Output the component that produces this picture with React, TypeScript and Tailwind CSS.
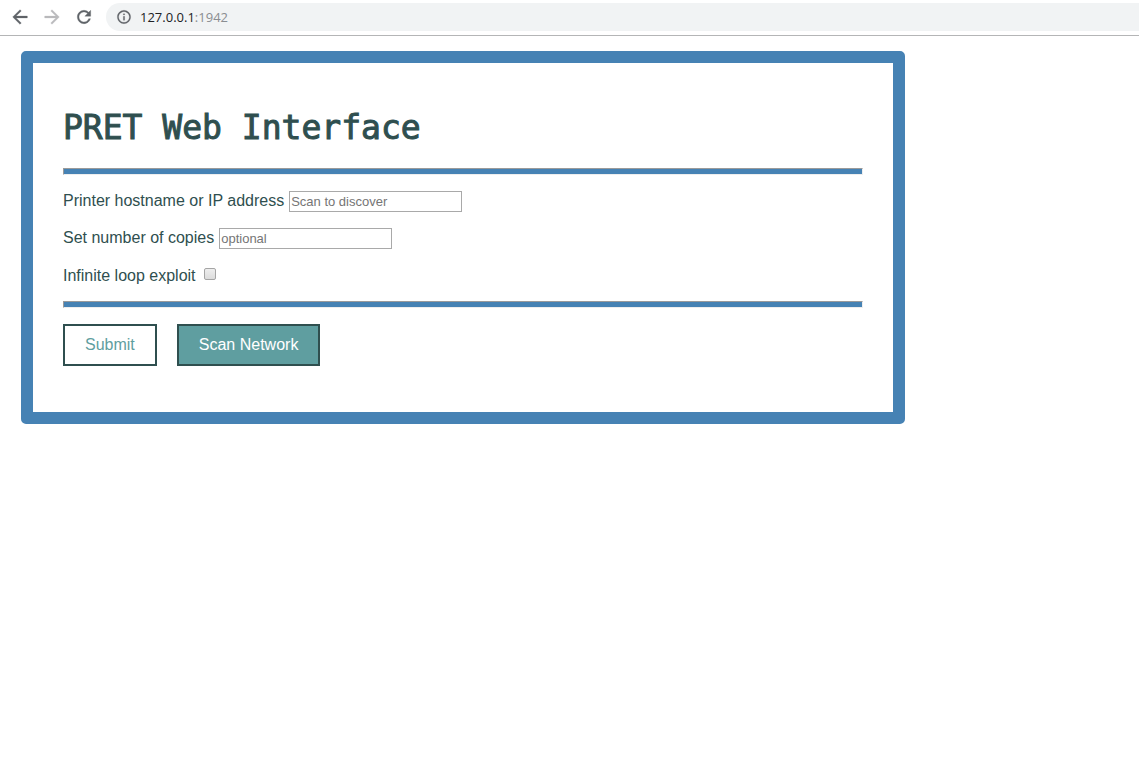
import React from "react";

function Divider() {
  return (
    <hr className="h-[7px] border border-t-[#9a9a9a] border-r-[#eeeeee] border-b-[#eeeeee] border-l-[#9a9a9a] bg-[#4682b4]" />
  );
}

function BrowserBar() {
  return (
    <header className="flex h-9 items-start border-b border-[#b4b5b6] bg-white pt-[3px] pl-2">
      <nav className="flex h-7 items-center gap-2" aria-label="Browser">
        <button type="button" aria-label="Back" className="flex size-6 items-center justify-center text-[#5f6368]">
          <svg viewBox="0 0 24 24" className="size-[22px]" fill="currentColor" stroke="currentColor" strokeWidth="0.3">
            <path d="M20 11H7.83l5.59-5.59L12 4l-8 8 8 8 1.41-1.41L7.83 13H20v-2z" />
          </svg>
        </button>
        <button type="button" aria-label="Forward" className="flex size-6 items-center justify-center text-[#bababc]">
          <svg viewBox="0 0 24 24" className="size-[22px]" fill="currentColor" stroke="currentColor" strokeWidth="0.3">
            <path d="M12 4l-1.41 1.41L16.17 11H4v2h12.17l-5.58 5.59L12 20l8-8z" />
          </svg>
        </button>
        <button type="button" aria-label="Reload" className="flex size-6 items-center justify-center text-[#5f6368]">
          <svg viewBox="0 0 24 24" className="size-5" fill="currentColor" stroke="currentColor" strokeWidth="0.4">
            <path d="M17.65 6.35C16.2 4.9 14.21 4 12 4c-4.42 0-7.99 3.58-7.99 8s3.57 8 7.99 8c3.73 0 6.84-2.55 7.73-6h-2.08c-.82 2.33-3.04 4-5.65 4-3.31 0-6-2.69-6-6s2.69-6 6-6c1.66 0 3.14.69 4.22 1.78L13 11h7V4l-2.35 2.35z" />
          </svg>
        </button>
      </nav>
      <div className="ml-[10px] flex h-7 flex-1 items-center gap-2 rounded-l-full bg-[#f1f3f4] pl-[10px]">
        <svg viewBox="0 0 24 24" className="size-4" fill="#5f6368" stroke="#5f6368" strokeWidth="0.3">
          <path d="M11 17h2v-6h-2v6zm1-15C6.48 2 2 6.48 2 12s4.48 10 10 10 10-4.48 10-10S17.52 2 12 2zm0 18c-4.41 0-8-3.59-8-8s3.59-8 8-8 8 3.59 8 8-3.59 8-8 8zM11 9h2V7h-2v2z" />
        </svg>
        <span className="font-['Open_Sans',sans-serif] text-[13px] leading-5 text-[#202124]">
          127.0.0.1<span className="text-[#8a8d91]">:1942</span>
        </span>
      </div>
    </header>
  );
}

export default function App() {
  return (
    <div className="min-h-screen bg-white font-['Liberation_Sans',Arial,sans-serif] text-base text-[#2f4f4f]">
      <BrowserBar />
      <main className="px-[21px] py-[15px]">
        <form
          onSubmit={(event) => event.preventDefault()}
          className="flex w-full max-w-[884px] flex-col gap-4 rounded-[5px] border-[12px] border-[#4682b4] bg-white px-[30px] py-[46px]"
        >
          <h1 className="pb-[5px] font-['DejaVu_Sans_Mono',monospace] text-[33px] leading-[38px] font-normal [-webkit-text-stroke:1px_#2f4f4f]">
            PRET Web Interface
          </h1>
          <Divider />
          <div className="flex h-[21px] items-start gap-[5px]">
            <label htmlFor="host" className="leading-5">Printer hostname or IP address</label>
            <input
              id="host"
              type="text"
              placeholder="Scan to discover"
              className="h-[21px] w-[173px] border border-[#a9a9a9] bg-white px-px text-[13px] placeholder:text-[#757575]"
            />
          </div>
          <div className="flex h-[21px] items-start gap-[5px]">
            <label htmlFor="copies" className="leading-5">Set number of copies</label>
            <input
              id="copies"
              type="text"
              placeholder="optional"
              className="h-[21px] w-[173px] border border-[#a9a9a9] bg-white px-px text-[13px] placeholder:text-[#757575]"
            />
          </div>
          <div className="flex h-5 items-start gap-2">
            <label htmlFor="loop" className="leading-[22px]">Infinite loop exploit</label>
            <input
              id="loop"
              type="checkbox"
              className="mt-[3px] size-3 appearance-none rounded-[2px] border border-[#a5a5a5] bg-linear-to-b from-[#eeeeee] to-[#dcdcdc] checked:from-[#4682b4] checked:to-[#4682b4]"
            />
          </div>
          <Divider />
          <div className="flex gap-5">
            <button type="submit" className="h-[42px] border-2 border-[#2f4f4f] bg-white px-5 text-[#5f9ea0]">
              Submit
            </button>
            <button type="button" className="h-[42px] border-2 border-[#2f4f4f] bg-[#5f9ea0] px-5 text-white">
              Scan Network
            </button>
          </div>
        </form>
      </main>
    </div>
  );
}
